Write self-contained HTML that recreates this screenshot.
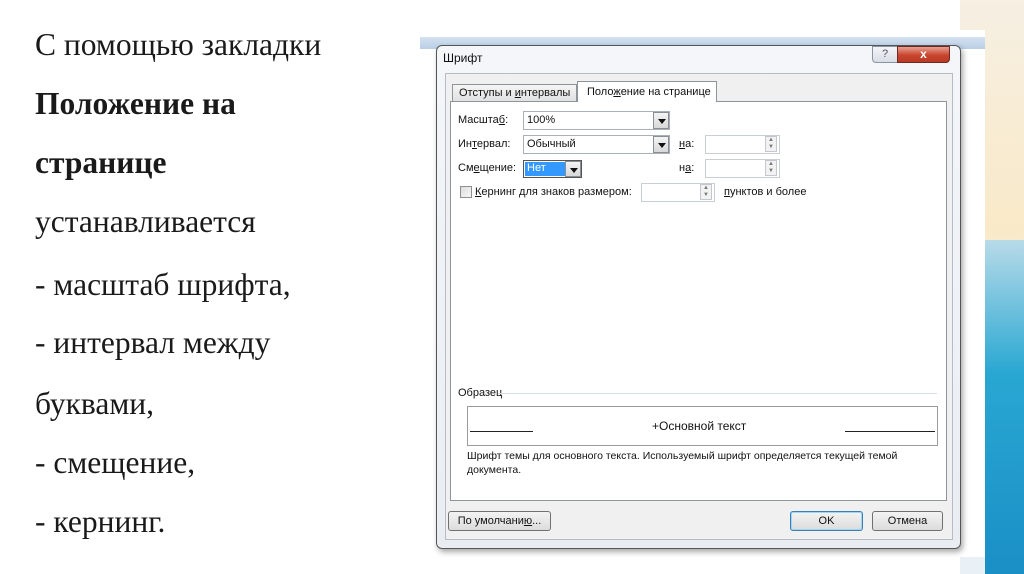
<!DOCTYPE html>
<html><head><meta charset="utf-8"><style>
*{margin:0;padding:0;box-sizing:border-box}
body{width:1024px;height:574px;overflow:hidden;background:#fff;position:relative;font-family:"Liberation Sans",sans-serif}
.a{position:absolute}
.lt{position:absolute;left:35px;font-family:"Liberation Serif",serif;font-size:31.5px;color:#1a1a1a;white-space:nowrap;line-height:36px}
.s{font-size:11px;color:#111;white-space:nowrap;position:absolute}
.box{position:absolute;background:#fff;border:1px solid #a9b0b8}
.dd{position:absolute;width:16px;border:1px solid #8a8f96;background:linear-gradient(#f4f4f4,#d8d8d8)}
.dd:after{content:"";position:absolute;left:4px;top:6px;border-left:4px solid transparent;border-right:4px solid transparent;border-top:5px solid #111}
.sp{position:absolute;width:12px;height:16px;border:1px solid #c4c8cc;background:#f2f2f2;font-size:6px;color:#777;text-align:center;line-height:7px}
.btn{position:absolute;border:1px solid #707070;border-radius:3px;background:linear-gradient(#f3f3f3,#dcdcdc);font-size:11px;text-align:center;line-height:18px;color:#111}
</style></head><body>
<div class="a" style="left:960px;top:0;width:64px;height:574px;background:linear-gradient(#f6efe2,#f9e9c8 40%,#e9f1f6 60%)"></div>
<div class="a" style="left:985px;top:240px;width:39px;height:334px;background:linear-gradient(#b8dbe9,#29a7d2 40%,#1a8fc6)"></div>
<div class="a" style="left:420px;top:30px;width:565px;height:527px;background:#fff"></div>
<div class="a" style="left:420px;top:37px;width:565px;height:12px;background:linear-gradient(#d4e1ef,#b9cee6)"></div>

<div class="lt" style="top:27px">С помощью закладки</div>
<div class="lt" style="top:86px;font-weight:bold">Положение на</div>
<div class="lt" style="top:145px;font-weight:bold">странице</div>
<div class="lt" style="top:204px">устанавливается</div>
<div class="lt" style="top:267px">- масштаб шрифта,</div>
<div class="lt" style="top:325px">- интервал между</div>
<div class="lt" style="top:386px">буквами,</div>
<div class="lt" style="top:445px">- смещение,</div>
<div class="lt" style="top:504px">- кернинг.</div>

<div class="a" style="left:436px;top:45px;width:525px;height:504px;border:1px solid #555;border-radius:6px;background:linear-gradient(#f4f6f9,#e9edf2);box-shadow:2px 3px 6px rgba(0,0,0,.35)"></div>
<div class="s" style="left:443px;top:51px;font-size:12px">Шрифт</div>
<div class="a" style="left:872px;top:46px;width:26px;height:17px;border:1px solid #8a95a3;border-radius:0 0 0 4px;background:linear-gradient(#f2f4f7,#d9dee5);font-size:11px;color:#556;text-align:center;line-height:15px">?</div>
<div class="a" style="left:897px;top:46px;width:53px;height:17px;border:1px solid #6e2a22;border-radius:0 0 4px 0;background:linear-gradient(#e8a093,#c8452f 55%,#b83a25);color:#fff;font-weight:bold;font-size:12px;text-align:center;line-height:15px">x</div>
<div class="a" style="left:445px;top:73px;width:508px;height:467px;border:1px solid #b5bcc6;background:#f0f0f0"></div>
<div class="a" style="left:452px;top:84px;width:125px;height:18px;border:1px solid #8e9499;border-bottom:none;background:linear-gradient(#f5f5f5,#e0e0e0)"></div>
<div class="s" style="left:459px;top:87px">Отступы и <u>и</u>нтервалы</div>
<div class="a" style="left:450px;top:101px;width:497px;height:400px;border:1px solid #8e9499;background:#fff"></div>
<div class="a" style="left:577px;top:81px;width:140px;height:21px;border:1px solid #8e9499;border-bottom:none;background:#fff"></div>
<div class="s" style="left:587px;top:86px">Поло<u>ж</u>ение на странице</div>

<div class="s" style="left:458px;top:114px">Масшта<u>б</u>:</div>
<div class="box" style="left:523px;top:111px;width:147px;height:19px"></div>
<div class="s" style="left:527px;top:114px">100%</div>
<div class="dd" style="left:653px;top:112px;height:17px"></div>

<div class="s" style="left:458px;top:138px">Ин<u>т</u>ервал:</div>
<div class="box" style="left:523px;top:135px;width:147px;height:19px"></div>
<div class="s" style="left:527px;top:138px">Обычный</div>
<div class="dd" style="left:653px;top:136px;height:17px"></div>
<div class="s" style="left:679px;top:138px"><u>н</u>а:</div>
<div class="box" style="left:705px;top:135px;width:75px;height:19px;border-color:#c9ced3"></div>
<div class="sp" style="left:765px;top:136px">▲<br>▼</div>

<div class="s" style="left:458px;top:162px">См<u>е</u>щение:</div>
<div class="box" style="left:523px;top:160px;width:59px;height:18px;border-color:#555"></div>
<div class="a" style="left:525px;top:162px;width:40px;height:14px;background:#3399ff"></div>
<div class="s" style="left:527px;top:162px;color:#fff">Нет</div>
<div class="dd" style="left:565px;top:161px;height:16px"></div>
<div class="s" style="left:679px;top:162px">н<u>а</u>:</div>
<div class="box" style="left:705px;top:159px;width:75px;height:19px;border-color:#c9ced3"></div>
<div class="sp" style="left:765px;top:160px">▲<br>▼</div>

<div class="a" style="left:460px;top:186px;width:12px;height:12px;border:1px solid #8e8f8f;background:linear-gradient(135deg,#ddd,#f8f8f8)"></div>
<div class="s" style="left:475px;top:186px"><u>К</u>ернинг для знаков размером:</div>
<div class="box" style="left:641px;top:183px;width:74px;height:19px;border-color:#c9ced3"></div>
<div class="sp" style="left:700px;top:184px">▲<br>▼</div>
<div class="s" style="left:724px;top:186px"><u>п</u>унктов и более</div>

<div class="s" style="left:458px;top:387px">Образец</div>
<div class="a" style="left:498px;top:393px;width:439px;height:1px;background:#d8dde2"></div>
<div class="box" style="left:467px;top:406px;width:471px;height:40px;border-color:#9a9a9a"></div>
<div class="a" style="left:470px;top:431px;width:63px;height:1px;background:#222"></div>
<div class="a" style="left:845px;top:431px;width:90px;height:1px;background:#222"></div>
<div class="s" style="left:652px;top:419px;font-size:12px">+Основной текст</div>
<div class="s" style="left:467px;top:450px;font-size:10.5px">Шрифт темы для основного текста. Используемый шрифт определяется текущей темой</div>
<div class="s" style="left:467px;top:464px;font-size:10.5px">документа.</div>

<div class="btn" style="left:448px;top:511px;width:103px;height:20px">По умолчани<u>ю</u>...</div>
<div class="btn" style="left:790px;top:511px;width:73px;height:20px;border-color:#3c7fb1;box-shadow:inset 0 0 0 1px #9fd5f5">OK</div>
<div class="btn" style="left:872px;top:511px;width:71px;height:20px">Отмена</div>
</body></html>
